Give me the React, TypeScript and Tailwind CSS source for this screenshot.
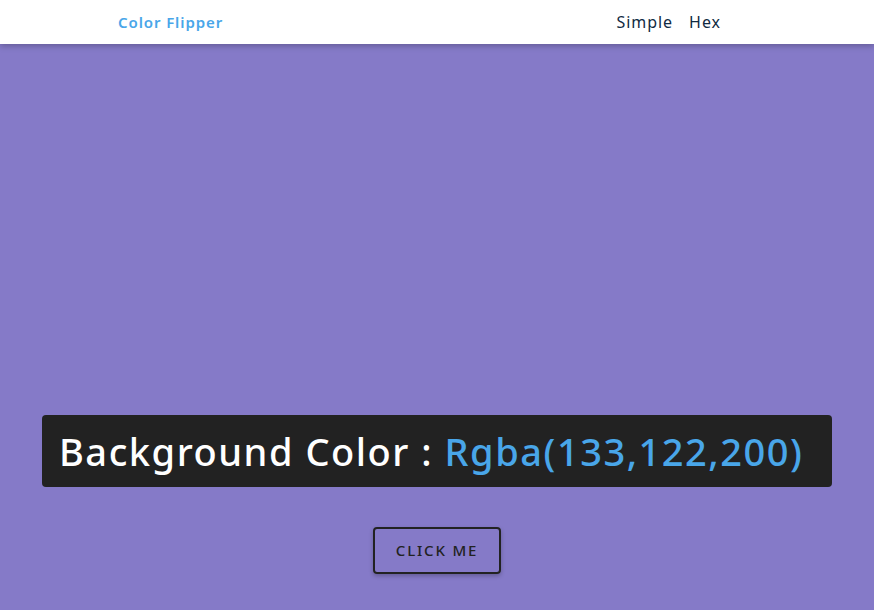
export default function App() {
  return (
    <div className="min-h-[610px] bg-[rgb(133,122,200)] font-['Roboto',sans-serif]">
      <nav className="h-11 bg-white shadow-[0_2px_6px_rgba(0,0,0,0.25)] flex items-center justify-between pl-[118px] pr-[153px] font-['Open_Sans',sans-serif] relative">
        <h4 className="text-[#49a6e9] text-[15px] font-semibold tracking-[0.06em]">Color Flipper</h4>
        <ul className="flex gap-4 text-[#102a42] text-[16px] tracking-[0.06em]">
          <li>Simple</li>
          <li>Hex</li>
        </ul>
      </nav>
      <main className="flex flex-col items-center pt-[371px]">
        <div className="w-[790px] h-[72px] bg-[#222] rounded flex items-center pl-[17px]">
          <h2 className="text-white text-[38px] font-medium tracking-[0.04em] whitespace-nowrap">
            Background Color : <span className="text-[#49a6e9]">Rgba(133,122,200)</span>
          </h2>
        </div>
        <button className="mt-10 w-[128px] h-[47px] border-2 border-[#222] rounded text-[#222] text-[15px] font-medium tracking-[0.12em] shadow-[0_2px_4px_rgba(0,0,0,0.25)]">
          CLICK ME
        </button>
      </main>
    </div>
  );
}
